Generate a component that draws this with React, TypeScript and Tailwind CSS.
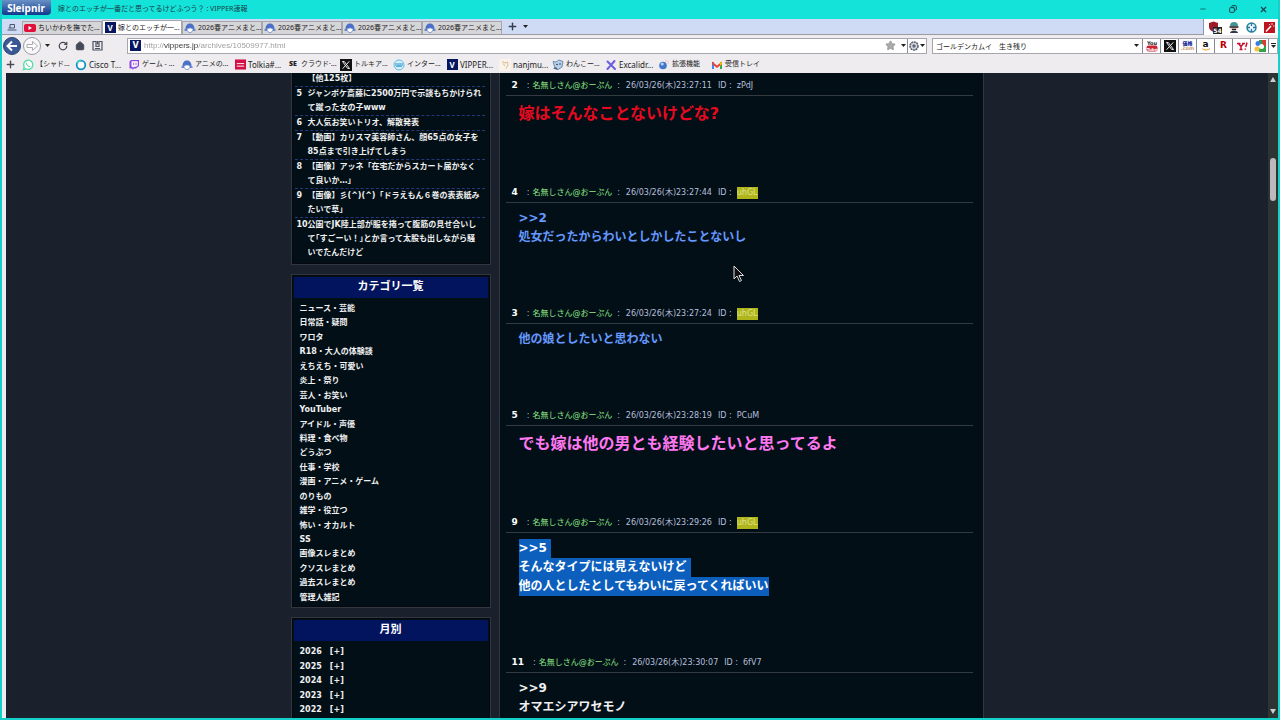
import React from 'react';
import { Copy, House, Minus, Plus, RotateCw, Star, X } from 'lucide-react';

interface Post {
  no: number;
  time: string;
  id: string;
  marked?: boolean;
  style: string;
  selected?: boolean;
  lines: string[];
}

const ranking = [
  { no: 4, title: '【他125枚】' },
  { no: 5, title: 'ジャンポケ斎藤に2500万円で示談もちかけられて蹴った女の子www' },
  { no: 6, title: '大人気お笑いトリオ、解散発表' },
  { no: 7, title: '【動画】カリスマ美容師さん、顔65点の女子を85点まで引き上げてしまう' },
  { no: 8, title: '【画像】アッネ「在宅だからスカート届かなくて良いか…」' },
  { no: 9, title: '【画像】彡(^)(^)「ドラえもん６巻の表表紙みたいで草」' },
  { no: 10, title: '公園でJK陸上部が服を捲って腹筋の見せ合いして｢すごーい！｣とか言って太股も出しながら騒いでたんだけど' },
];

const categories = [
  'ニュース・芸能', '日常話・疑問', 'ワロタ', 'R18・大人の体験談', 'えちえち・可愛い', '炎上・祭り', '芸人・お笑い',
  'YouTuber', 'アイドル・声優', '料理・食べ物', 'どうぶつ', '仕事・学校', '漫画・アニメ・ゲーム', 'のりもの',
  '雑学・役立つ', '怖い・オカルト', 'SS', '画像スレまとめ', 'クソスレまとめ', '過去スレまとめ', '管理人雑記',
];

const years = ['2026', '2025', '2024', '2023', '2022'];

const posts: Post[] = [
  { no: 2, time: '26/03/26(木)23:27:11', id: 'zPdJ', style: 'text-base leading-6 text-[#e60a20]', lines: ['嫁はそんなことないけどな?'] },
  { no: 4, time: '26/03/26(木)23:27:44', id: 'uhGL', marked: true, style: 'text-xs leading-[19px] text-[#6699ff]', lines: ['>>2', '処女だったからわいとしかしたことないし'] },
  { no: 3, time: '26/03/26(木)23:27:24', id: 'uhGL', marked: true, style: 'text-xs leading-[19px] text-[#6699ff]', lines: ['他の娘としたいと思わない'] },
  { no: 5, time: '26/03/26(木)23:28:19', id: 'PCuM', style: 'text-base leading-6 text-[#ff78f0]', lines: ['でも嫁は他の男とも経験したいと思ってるよ'] },
  { no: 9, time: '26/03/26(木)23:29:26', id: 'uhGL', marked: true, selected: true, style: 'text-xs leading-[19px] text-white', lines: ['>>5', 'そんなタイプには見えないけど', '他の人としたとしてもわいに戻ってくればいい'] },
  { no: 11, time: '26/03/26(木)23:30:07', id: '6fV7', style: 'text-xs leading-[19px] text-[#f0f0f0]', lines: ['>>9', 'オマエシアワセモノ'] },
];

const YoutubeMark = () => (
  <svg viewBox="0 0 12 12" className="size-3 shrink-0">
    <rect y="2" width="12" height="8" rx="2" fill="#e0103a" />
    <path d="M4.500 4v4L8 6z" fill="#fff" />
  </svg>
);

const VMark = () => (
  <span className="flex size-[11px] shrink-0 items-center justify-center bg-[#07175f] text-[8px] leading-none font-bold text-white">V</span>
);

const CapMark = () => (
  <svg viewBox="0 0 12 12" className="size-3 shrink-0">
    <path d="M1.500 7C1.500 3.500 3.500 1.500 6 1.500S10.500 3.500 10.500 7l-2 .5C8 5.500 4 5.500 3.500 7.500z" fill="#4a70c8" />
    <path d="M3 7.500C4 5.500 8 5.500 9 7.500 8.500 9.500 7.500 10.500 6 10.500S3.500 9.500 3 7.500z" fill="#fff" stroke="#6f88c8" strokeWidth=".8" />
    <path d="M.5 8h2.500M9 8h2.500" stroke="#4a70c8" strokeWidth="1.500" />
  </svg>
);

const XMark = () => (
  <svg viewBox="0 0 12 12" className="size-3 shrink-0">
    <rect width="12" height="12" fill="#111" />
    <path d="M2.500 2.500h1.800l5.200 7H7.700z" fill="none" stroke="#fff" strokeWidth=".9" />
    <path d="M9.300 2.300 6.600 5.400M5.300 6.700 2.600 9.700" stroke="#fff" strokeWidth=".9" />
  </svg>
);

const WhatsMark = () => (
  <svg viewBox="0 0 12 12" className="size-3 shrink-0">
    <path d="M1.500 10.500 2.200 8A4.600 4.600 0 1 1 4 9.800z" fill="#fff" stroke="#52dba4" strokeWidth="1.300" />
    <path d="M4.300 3.800c0 2 1.700 3.800 3.800 3.800M4.500 5.500 6.500 7.500" stroke="#52dba4" strokeWidth="1" fill="none" />
  </svg>
);

const RingMark = () => (
  <svg viewBox="0 0 12 12" className="size-3 shrink-0">
    <circle cx="6" cy="6" r="4.300" fill="#fff" stroke="#1592c4" strokeWidth="1.800" />
    <path d="M2 4a4.500 4.500 0 0 1 4-2.500" stroke="#42cbd0" strokeWidth="1.800" fill="none" />
  </svg>
);

const TwitchMark = () => (
  <svg viewBox="0 0 12 12" className="size-3 shrink-0">
    <path d="M1.500 2.500 3 1h8v6L8 9.500H6L4.500 11V9.500h-3z" fill="#8b45e0" />
    <path d="M3.500 2.200h6.300v4.200L8.300 7.800H6L4.800 8.900V7.800H3.500z" fill="#fff" />
    <path d="M5.700 3.700v2.500M8 3.700v2.500" stroke="#8b45e0" strokeWidth=".9" />
  </svg>
);

const ToruMark = () => (
  <svg viewBox="0 0 12 12" className="size-[11px] shrink-0">
    <rect y=".5" width="12" height="11" fill="#d40f46" />
    <path d="M2 5h8M2 7.800h8" stroke="#fff" strokeWidth="1" />
  </svg>
);

const SeMark = () => <span className="shrink-0 text-[7px] font-black text-[#222]">SE</span>;

const WaveMark = () => (
  <svg viewBox="0 0 12 12" className="size-3 shrink-0">
    <circle cx="6" cy="6" r="5" fill="#d6effa" stroke="#54b4e0" strokeWidth=".9" />
    <path d="M3 4v2.500a1 1 0 0 0 2 0V4M5 6.500a1 1 0 0 0 2 0V4M7 6.500a1 1 0 0 0 2 0V4" stroke="#2793ce" strokeWidth="1" fill="none" />
  </svg>
);

const FadedMark = () => (
  <svg viewBox="0 0 12 12" className="size-3 shrink-0">
    <rect width="12" height="12" fill="#faf3ea" />
    <path d="M3 2.500 6 4l2.500-1L9 6 7 9.500M4 4.500 6 7" stroke="#d9ba98" strokeWidth="1" fill="none" />
  </svg>
);

const DogMark = () => (
  <svg viewBox="0 0 12 12" className="size-3 shrink-0">
    <path d="M1 2.500 4 3l3-2 4 1.500L10 8 6 10.500 3 9z" fill="#b8d0ea" stroke="#54779f" strokeWidth=".8" />
    <circle cx="5" cy="5.500" r=".8" fill="#29384f" />
    <circle cx="8" cy="5" r=".8" fill="#29384f" />
    <path d="M1 9.500 4 8l2 3z" fill="#4a5f80" />
  </svg>
);

const ExcalMark = () => (
  <svg viewBox="0 0 12 12" className="size-3 shrink-0">
    <path d="M2.500 2.500l7.500 7.500M9.500 2 6.500 5.500M5 7.200 2.500 10" stroke="#6a5edb" strokeWidth="2" strokeLinecap="round" />
  </svg>
);

const OrbMark = () => (
  <svg viewBox="0 0 12 12" className="size-3 shrink-0">
    <circle cx="5" cy="6.500" r="3.800" fill="#4176cd" />
    <circle cx="4.200" cy="5" r="1.600" fill="#b5cff4" />
    <path d="M7 1.500c2 0 3.500 1.300 3.500 3.500" stroke="#f1cfd2" strokeWidth="1.500" fill="none" />
  </svg>
);

const GmailMark = () => (
  <svg viewBox="0 0 12 12" className="size-3 shrink-0">
    <path d="M1 10V3h2v7z" fill="#4285f4" />
    <path d="M9 10V3h2v7z" fill="#34a853" />
    <path d="M1 2.500 6 6.500l5-4v2.600L6 9 1 5.100z" fill="#ea4335" />
    <path d="M9 3.700 11 2.500v2.600L9 6.700z" fill="#fbbc04" />
  </svg>
);

const tabs = [
  { icon: <YoutubeMark />, title: 'ちいかわを撫でた...' },
  { icon: <VMark />, title: '嫁とのエッチが一...', active: true },
  { icon: <CapMark />, title: '2026春アニメまと...' },
  { icon: <CapMark />, title: '2026春アニメまと...' },
  { icon: <CapMark />, title: '2026春アニメまと...' },
  { icon: <CapMark />, title: '2026春アニメまと...' },
];

const bookmarks = [
  { icon: <WhatsMark />, title: '【シャド...' },
  { icon: <RingMark />, title: 'Cisco T...', latin: true },
  { icon: <TwitchMark />, title: 'ゲーム - ...' },
  { icon: <CapMark />, title: 'アニメの...' },
  { icon: <ToruMark />, title: 'Tolkia#...', latin: true },
  { icon: <SeMark />, title: 'クラウド·...' },
  { icon: <XMark />, title: 'トルキア...' },
  { icon: <WaveMark />, title: 'インター...' },
  { icon: <VMark />, title: 'VIPPER...', latin: true },
  { icon: <FadedMark />, title: 'nanjmu...', latin: true },
  { icon: <DogMark />, title: 'わんこー...' },
  { icon: <ExcalMark />, title: 'Excalidr...', latin: true },
  { icon: <OrbMark />, title: '拡張機能' },
  { icon: <GmailMark />, title: '受信トレイ' },
];

const engines = [
  {
    name: 'YouTube',
    icon: (
      <svg viewBox="0 0 12 12" className="size-3">
        <text x="6" y="5" textAnchor="middle" fontSize="5" fontWeight="bold" fill="#222">You</text>
        <rect x=".5" y="5.500" width="11" height="6" rx="2" fill="#cc2438" />
        <text x="6" y="10.500" textAnchor="middle" fontSize="4" fontWeight="bold" fill="#fff">Tube</text>
      </svg>
    ),
  },
  { name: 'X', icon: <XMark /> },
  {
    name: 'Kakaku',
    icon: (
      <span className="flex flex-col items-center text-[5px] leading-[5px] font-black text-[#252b9c]">
        価格<span className="text-[#cf9c6c]">.com</span>
      </span>
    ),
  },
  {
    name: 'Amazon',
    icon: (
      <span className="flex flex-col items-center text-[9px] leading-[7px] font-bold text-[#111]">
        a
        <svg viewBox="0 0 10 3" className="h-[3px] w-[10px]"><path d="M1 .5c2 2 6 2 8 0" stroke="#f29a26" fill="none" /></svg>
      </span>
    ),
  },
  { name: 'Rakuten', icon: <span className="text-[9px] leading-[9px] font-bold text-[#bf0000]">R</span> },
  {
    name: 'Yahoo',
    icon: (
      <svg viewBox="0 0 12 10" className="h-2.5 w-3" fill="none" stroke="#c8102e">
        <path d="M1 2.500h3.500M6 2.500h3M2.500 2.500l2.500 3 2.500-3M5 5.500v3M3.500 8.500h3" strokeWidth="1.500" />
        <path d="M11 1.500 9.800 6M9.300 7.500v1.200" strokeWidth="1.500" />
      </svg>
    ),
  },
  {
    name: 'Google',
    icon: (
      <svg viewBox="0 0 12 12" className="size-3">
        <rect x="5" width="7" height="12" fill="#2fa24b" />
        <path d="M8 0h4v6H9z" fill="#dd3a32" />
        <circle cx="4" cy="3.500" r="2.500" fill="#3a7de0" />
        <circle cx="3" cy="9" r="2.500" fill="#f2c230" />
        <circle cx="7.500" cy="6.500" r="2.500" fill="#fff" />
      </svg>
    ),
  },
];

const Caret = () => (
  <svg viewBox="0 0 5 3" className="h-[3px] w-[5px] shrink-0"><path d="M0 0h5L2.500 3z" fill="#222" /></svg>
);

const TitleBar = () => (
  <header className="flex h-[19px] shrink-0 items-start bg-[#14e3d9] pl-px text-[#173d47]">
    <button className="h-[15px] w-[50px] rounded-b-sm bg-linear-to-b from-[#6991c6] to-[#12388c] font-['Noto_Sans'] text-[10px] leading-[14px] font-bold text-white">Sleipnir</button>
    <h1 className="ml-[7px] font-['Noto_Sans','Noto_Sans_CJK_JP',sans-serif] text-[7px] leading-[18px]">嫁とのエッチが一番だと思ってるけどふつう？ : VIPPER速報</h1>
    <div className="ml-auto flex h-[18px] items-center gap-[22px] pr-3">
      <button aria-label="Minimize"><Minus className="size-2" /></button>
      <button aria-label="Restore"><Copy className="size-2 -scale-x-100" strokeWidth={3} /></button>
      <button aria-label="Close"><X className="size-[9px]" strokeWidth={3} /></button>
    </div>
  </header>
);

const TabBar = () => (
  <div className="flex h-4 shrink-0 border-b border-[#9a9ba3] bg-[#cfdaf4]">
    <button aria-label="Tab list" className="flex w-5 items-center justify-center">
      <svg viewBox="0 0 10 8" className="h-2 w-2.5" fill="none" stroke="#465368"><path d="M.5 7h9M1.500 5h6M3 5V1.500h4.500V5" /></svg>
    </button>
    <nav className="flex items-end">
      {tabs.map((tab, i) => (
        <button
          key={i}
          className={`flex w-20 items-center gap-0.5 border border-b-0 border-[#a7a8ae] pl-px font-['Noto_Sans','Noto_Sans_CJK_JP',sans-serif] text-[7px] leading-[12px] whitespace-nowrap text-[#222] ${tab.active ? 'h-[14px] bg-white' : 'h-[13px] bg-[#d6d5d8]'}`}
        >
          <span className="flex w-3 justify-center">{tab.icon}</span>
          <span>{tab.title}</span>
        </button>
      ))}
    </nav>
    <button aria-label="New tab" className="ml-1 px-px"><Plus className="size-[11px] text-[#333d4c]" strokeWidth={3} /></button>
    <button aria-label="Closed tabs" className="px-1"><Caret /></button>
    <div className="-mb-px ml-auto flex items-center gap-[7px] border-l border-[#8d96ab] bg-white pr-[3px] pl-[5px]">
      <button aria-label="Blocker">
        <svg viewBox="0 0 13 13" className="size-[13px]">
          <path d="M0 2 4.500.5 9 2v4c0 2-2 4-4.500 5C2 10 0 8 0 6z" fill="#9d1c28" />
          <rect x="4" y="6" width="9" height="7" fill="#222" />
          <text x="8.500" y="12" textAnchor="middle" fontSize="6" fontWeight="bold" fill="#fff">54</text>
        </svg>
      </button>
      <button aria-label="User agent">
        <svg viewBox="0 0 10 11" className="h-[11px] w-[10px]">
          <path d="M1 4a4 4 0 0 1 8 0z" fill="#459493" />
          <rect x="1.500" y="4" width="7" height="4" fill="#f1ccc4" />
          <path d="M.5 5h9M3 7.500h4" stroke="#222" strokeWidth="1.300" />
          <path d="M1 11c0-3 8-3 8 0z" fill="#32384a" />
        </svg>
      </button>
      <button aria-label="Target">
        <svg viewBox="0 0 11 11" className="size-[11px]">
          <circle cx="5.500" cy="5.500" r="4.500" fill="#e8f4fa" stroke="#2584a0" strokeWidth="1.500" />
          <path d="M5.500 1v3M5.500 7v3M1 5.500h3M7 5.500h3" stroke="#2a6fa8" strokeWidth="1.300" />
        </svg>
      </button>
      <button aria-label="Wand">
        <svg viewBox="0 0 11 11" className="size-[11px]">
          <rect width="11" height="11" fill="#bd1520" />
          <path d="M2 9.500 7 4" stroke="#fff" strokeWidth="1.500" />
          <path d="M8 1v2M9 4h1.500M5 2l1 1" stroke="#fff" strokeWidth=".8" />
        </svg>
      </button>
    </div>
  </div>
);

const AddressBar = () => (
  <div className="flex h-[21px] shrink-0 items-center bg-[#eeecef] pl-px">
    <button aria-label="Back" className="size-[18px] rounded-full border border-[#2b4273] bg-[#3a5996] p-px">
      <svg viewBox="0 0 14 14" className="size-full" fill="none" stroke="#fff" strokeWidth="2"><path d="M12 7H3M7 2.500 2.500 7 7 11.500" /></svg>
    </button>
    <button aria-label="Forward" className="ml-0.5 size-[18px] rounded-full border border-[#9b9ba1] bg-[#f8f8fa] p-px">
      <svg viewBox="0 0 14 14" className="size-full" fill="#fff" stroke="#aaaab0"><path d="M2 5.500h5.500V2.500L12.500 7l-5 4.500v-3H2z" /></svg>
    </button>
    <button aria-label="History" className="ml-1"><Caret /></button>
    <button aria-label="Reload" className="ml-2"><RotateCw className="size-[10px] text-[#454a57]" strokeWidth={3} /></button>
    <button aria-label="Home" className="ml-[7px]"><House className="size-[10px] fill-[#454a57] text-[#454a57]" strokeWidth={2} /></button>
    <button aria-label="Save page" className="ml-[7px]">
      <svg viewBox="0 0 11 11" className="size-[11px]" fill="none" stroke="#4c5160" strokeWidth="1.200"><path d="M1 1.500h3v5h3v-5h3v8.500H1zM5.500 1v3.500M3 8.500h5" /></svg>
    </button>
    <form className="ml-6 flex h-4 flex-1 items-center border border-[#a6a6ac] bg-white pl-0.5" onSubmit={(e) => e.preventDefault()}>
      <VMark />
      <input
        aria-label="Address"
        defaultValue="http://vippers.jp/archives/10509977.html"
        className="h-full min-w-0 flex-1 bg-[linear-gradient(to_right,#999_23px,#333_23px,#333_57px,#999_57px)] bg-clip-text pl-[3px] font-['Liberation_Sans'] text-[8px] text-transparent outline-none"
      />
      <button type="button" aria-label="Bookmark"><Star className="size-[11px] fill-[#aaa] text-[#999]" /></button>
      <button type="button" aria-label="Address list" className="mr-px ml-[5px]"><Caret /></button>
      <button type="button" aria-label="Engine" className="flex h-full items-center gap-px border-l border-[#88888f] px-px">
        <svg viewBox="0 0 10 10" className="size-[10px]"><circle cx="5" cy="5" r="4" fill="#d5d8de" stroke="#555c6b" strokeWidth="1.500" strokeDasharray="2 .6" /><circle cx="5" cy="5" r="1.700" fill="#60697a" /></svg>
        <Caret />
      </button>
    </form>
    <form className="ml-[5px] flex h-4 w-[346px] items-center border border-[#a6a6ac] bg-white" onSubmit={(e) => e.preventDefault()}>
      <input aria-label="Search" defaultValue="ゴールデンカムイ　生き残り" className="h-full min-w-0 flex-1 pl-[3px] text-[7px] text-[#222] outline-none" />
      <button type="button" aria-label="Search history" className="pr-[3px]"><Caret /></button>
      {engines.map((engine) => (
        <button key={engine.name} type="button" aria-label={engine.name} className="flex h-full w-[18px] items-center justify-center border-l border-[#88888f]">
          {engine.icon}
        </button>
      ))}
      <button type="button" aria-label="More engines" className="flex h-full w-[9px] flex-col items-center justify-center gap-px border-l border-[#88888f]">
        <span className="h-px w-[5px] bg-[#222]" />
        <Caret />
      </button>
    </form>
  </div>
);

const BookmarkBar = () => (
  <nav className="flex h-[17px] shrink-0 items-center bg-[#eeecef] pl-[3px]">
    <button aria-label="Add bookmark"><Plus className="size-[11px] text-[#444a58]" strokeWidth={3} /></button>
    <ul className="ml-1.5 flex">
      {bookmarks.map((item) => (
        <li key={item.title} className="w-[53px]">
          <a
            href="#"
            className={`flex h-[17px] items-center gap-0.5 font-['Noto_Sans','Noto_Sans_CJK_JP',sans-serif] whitespace-nowrap text-[#222] ${item.latin ? 'text-[8px]' : 'text-[7px]'}`}
          >
            <span className="flex w-3 shrink-0 justify-center">{item.icon}</span>
            {item.title}
          </a>
        </li>
      ))}
    </ul>
  </nav>
);

const Panel = ({ title, children }: { title?: string; children: React.ReactNode }) => (
  <section className="border border-[#303740] bg-[#020f17] p-0.5 shadow-[inset_0_0_0_1px_#06080e]">
    {title && <h2 className="h-[21px] bg-[#03145f] text-center text-[11px] leading-[20px] font-bold text-white">{title}</h2>}
    {children}
  </section>
);

const Sidebar = () => (
  <aside className="flex w-[200px] shrink-0 flex-col gap-[9px] font-bold text-[#f0f0f0]">
    <Panel>
      <ol className="pr-[3px] pb-0.5 pl-px text-[8px]">
        {ranking.map((item) => (
          <li key={item.no} className="flex border-b border-dashed border-[#26387a] pr-0.5 last:border-0">
            <span className="w-[13px] shrink-0 pl-0.5 leading-[14px]">{item.no === 4 ? '' : item.no}</span>
            <a href="#" className="leading-[14px]">{item.title}</a>
          </li>
        ))}
      </ol>
    </Panel>
    <Panel title="カテゴリ一覧">
      <ul className="mt-1 flex h-[303px] flex-col justify-between px-1.5 text-[8px] leading-[14px]">
        {categories.map((name) => (
          <li key={name}><a href="#">{name}</a></li>
        ))}
      </ul>
    </Panel>
    <Panel title="月別">
      <ul className="mt-1 flex h-[72px] flex-col justify-between px-1.5 text-[8px] leading-[14px]">
        {years.map((year) => (
          <li key={year} className="flex gap-2">
            <a href="#">{year}</a>
            <button>[+]</button>
          </li>
        ))}
      </ul>
    </Panel>
  </aside>
);

const PostItem = ({ post }: { post: Post }) => (
  <article className="pb-[57px]">
    <header className="flex h-5 items-center border-b border-[#343b40] pt-px pl-1.5 text-[8px] text-[#b8bfdc]">
      <span className="text-[9px] font-bold text-white">{post.no}</span>
      <span className="ml-[9px]">:</span>
      <span className="ml-[3px] text-[#8fe887]">名無しさん@おーぷん</span>
      <span className="ml-[5px]">:</span>
      <time className="ml-1.5">{post.time}</time>
      <span className="ml-1.5">ID :</span>
      <a href="#" className={`ml-[5px] ${post.marked ? 'bg-[#b0b51c] leading-3 text-[#dde38c]' : ''}`}>{post.id}</a>
    </header>
    <div className={`pt-1.5 pl-[13px] font-bold ${post.style}`}>
      {post.lines.map((line, i) => (
        <p key={line}>
          <span className={post.selected ? `inline-block bg-[#0d5fbd] ${i < post.lines.length - 1 ? 'pr-1' : ''}` : ''}>{line}</span>
        </p>
      ))}
    </div>
  </article>
);

const App: React.FC = () => (
  <div className="relative flex h-screen flex-col overflow-hidden border-x-2 border-b-2 border-[#14d0ca] bg-[#eeecef] font-['DejaVu_Sans','Noto_Sans_CJK_JP',sans-serif]">
    <div className="-mx-0.5 shrink-0"><TitleBar /></div>
    <TabBar />
    <AddressBar />
    <BookmarkBar />
    <div className="flex min-h-0 flex-1 pl-1">
      <div className="flex min-w-0 flex-1 justify-center overflow-hidden bg-[#1b212c]">
        <div className="flex w-full max-w-[693px] gap-2">
          <div className="-mt-1 min-w-0 shrink-0"><Sidebar /></div>
          <main className="min-w-0 flex-1 self-start border-x border-[#303740] bg-[#020f17] pt-[3px] pr-2.5 pl-1.5">
            {posts.map((post) => (
              <PostItem key={post.no} post={post} />
            ))}
          </main>
        </div>
      </div>
      <div className="flex w-2.5 shrink-0 flex-col items-center bg-[#2c3434] py-1">
        <svg viewBox="0 0 6 5" className="h-[5px] w-1.5"><path d="M0 5h6L3 0z" fill="#ccc" /></svg>
        <div className="mt-[76px] h-[43px] w-1.5 rounded-full bg-[#bcb9bd]" />
        <svg viewBox="0 0 6 5" className="mt-auto h-[5px] w-1.5"><path d="M0 0h6L3 5z" fill="#ccc" /></svg>
      </div>
    </div>
    <svg viewBox="0 0 12 18" className="pointer-events-none absolute top-[265px] left-[731px] h-[18px] w-3">
      <path d="M1 1v13l3-3 2.500 5.500 2-1L6 10.500h4.500z" fill="#111" stroke="#ddd" />
    </svg>
  </div>
);

export default App;
